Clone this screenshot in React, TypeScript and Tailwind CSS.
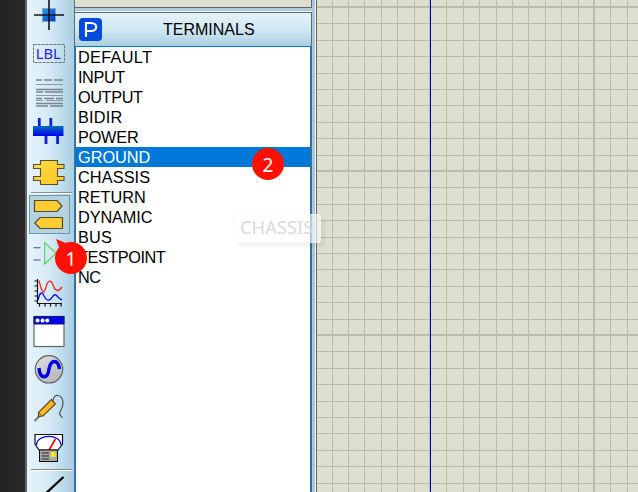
import type { ReactNode } from "react";

const terminals = [
  { name: "DEFAULT", tracking: "tracking-[0.3px]" },
  { name: "INPUT", tracking: "tracking-[-0.4px]" },
  { name: "OUTPUT", tracking: "tracking-[-0.4px]" },
  { name: "BIDIR", tracking: "tracking-[0.2px]" },
  { name: "POWER", tracking: "tracking-[-0.2px]" },
  { name: "GROUND", tracking: "" },
  { name: "CHASSIS", tracking: "tracking-[0.1px]" },
  { name: "RETURN", tracking: "" },
  { name: "DYNAMIC", tracking: "tracking-[-0.1px]" },
  { name: "BUS", tracking: "tracking-[0.2px]" },
  { name: "TESTPOINT", tracking: "tracking-[-0.45px]" },
  { name: "NC", tracking: "tracking-[-0.5px]" },
];

const minorSteps = [17, 34, 50, 67, 83, 99, 116, 132, 149];

// Each tool occupies one slot of the vertical strip.
function Tool({ top, height, children }: { top: number; height: number; children: ReactNode }) {
  return (
    <svg className="block shrink-0" width="47" height={height} viewBox={`27 ${top} 47 ${height}`} fill="none">
      {children}
    </svg>
  );
}

function Toolbar() {
  return (
    <div className="flex w-[47px] shrink-0 flex-col overflow-hidden bg-linear-to-r from-[#e7f4fb] via-[#d3e9f5] to-[#a9cfe2]">
      <Tool top={0} height={36}>
        <defs>
          <linearGradient id="node" x1="0" y1="0" x2="1" y2="1">
            <stop stopColor="#20a0e8" />
            <stop offset="1" stopColor="#0030f0" />
          </linearGradient>
        </defs>
        <rect x="42.5" y="8.5" width="13" height="13" fill="url(#node)" stroke="#8aa4b0" />
        <path d="M49 0V30M34 15H64" stroke="#151515" strokeWidth="1.6" />
      </Tool>
      <Tool top={36} height={36}>
        <rect x="33.5" y="44.5" width="31" height="18" stroke="#68747a" strokeDasharray="3 1" />
        <text x="35.8" y="59" fontSize="14.3" textLength="25" lengthAdjust="spacingAndGlyphs" fill="#2222e8" style={{ fontFamily: "'Noto Sans', sans-serif" }}>LBL</text>
      </Tool>
      <Tool top={72} height={40}>
        <path d="M36 80H42M44 80H52M54 80H63M36 89.5H63M36 92H43M45 92H63M36 98.5H42M44 98.5H54M56 98.5H63M36 103.5H63M36 106H48M50 106H63" stroke="#78858b" strokeWidth="1.3" />
        <path d="M36 84.5H63M36 95.5H63M36 100.5H43M46 100.5H63" stroke="#8c999f" />
      </Tool>
      <Tool top={112} height={40}>
        <defs>
          <linearGradient id="bus" x1="0" y1="0" x2="0" y2="1">
            <stop stopColor="#0870bc" />
            <stop offset="1" stopColor="#0000f0" />
          </linearGradient>
        </defs>
        <path d="M39.3 118V127M50.8 118V127M46 135V144M57.6 135V144" stroke="#0c20e0" strokeWidth="2.8" />
        <rect x="33" y="126" width="30.5" height="10" fill="url(#bus)" />
      </Tool>
      <Tool top={152} height={39}>
        <defs>
          <linearGradient id="chip" x1="0" y1="0" x2="1" y2="1">
            <stop stopColor="#ffdc50" />
            <stop offset="1" stopColor="#ffc41c" />
          </linearGradient>
        </defs>
        <path d="M40.5 160.5H57.5V164.5H64V168.5H57.5V176.5H64V180.5H57.5V184.5H40.5V180.5H33.5V176.5H40.5V168.5H33.5V164.5H40.5Z" fill="url(#chip)" stroke="#58502c" strokeWidth="1.1" />
      </Tool>
      <Tool top={191} height={46}>
        <path d="M31 192.5H72" stroke="#888f92" />
        <path d="M31 193.5H72" stroke="#ffffff" />
        <rect x="29.5" y="195.5" width="40" height="38" fill="#b5d2df" stroke="#649ab1" />
        <path d="M34.5 200.5H57L62 206L57 211.5H34.5Z" fill="#ffcc32" stroke="#4c4b32" strokeWidth="1.2" />
        <path d="M62.5 217.5H40L34.8 223L40 228.5H62.5Z" fill="#ffcc32" stroke="#4c4b32" strokeWidth="1.2" />
      </Tool>
      <Tool top={237} height={37}>
        <path d="M33.5 247.7H40.5M33.5 260H40.5" stroke="#46565c" strokeWidth="1.1" />
        <path d="M44.7 242.5V264L56 253.3Z" stroke="#50d060" strokeWidth="1.1" />
      </Tool>
      <Tool top={274} height={37}>
        <path d="M37.5 279V303.5H62M34.5 281H37M34.5 286H37M34.5 291H37M34.5 296H37M34.5 301H37M39.5 304V306.5M45 304V306.5M50.5 304V306.5M56 304V306.5M61 304V306.5" stroke="#111" strokeWidth="1.2" />
        <path d="M39 280.5L41 288C43 293 44 294 46 287C48 280 51 279 53 285C56 293 59 291 62 287" stroke="#ff2020" strokeWidth="1.3" />
        <path d="M38 300C40 292 42 291 44 296C48 303 50 300 53 296C55 293 57 296 59 298L62 300" stroke="#0000ff" strokeWidth="1.3" />
      </Tool>
      <Tool top={311} height={39}>
        <rect x="34" y="316.5" width="30" height="30" fill="white" stroke="#5c6568" strokeWidth="1.2" />
        <path d="M34 316.5H64V324H34Z" fill="#0000f2" stroke="#171768" />
        <path d="M37.5 320.4H37.6M42.5 320.4H42.6M47.2 320.4H47.3" stroke="white" strokeWidth="4" strokeLinecap="round" />
      </Tool>
      <Tool top={350} height={38}>
        <defs>
          <linearGradient id="generator" x1="0" y1="0" x2="1" y2="1">
            <stop stopColor="#e2e2e2" />
            <stop offset="1" stopColor="#b0b0b0" />
          </linearGradient>
        </defs>
        <circle cx="49" cy="369.3" r="13.7" fill="url(#generator)" stroke="#606367" strokeWidth="1.2" />
        <path d="M39 368C40 380 48 379 49 369C51 359 58 359 59.5 369" stroke="#0000f0" strokeWidth="3.4" />
      </Tool>
      <Tool top={388} height={40}>
        <path d="M34.5 421L40 415.5" stroke="#6e777a" strokeWidth="2" />
        <path d="M38.5 412.5L51.5 399.5L55.3 404L43 416L38.5 416.5Z" fill="#ffbc20" stroke="#5e4a20" strokeWidth="1.2" />
        <path d="M38.5 413L42.5 416" stroke="#57522d" />
        <path d="M53 401C54 393 62 394 63 402C64 410 57 412 60.5 415.5L62.5 418" stroke="#465158" strokeWidth="1.2" />
      </Tool>
      <Tool top={428} height={41}>
        <path d="M35 434.5H62.5V444L58 450H39L35 444Z" fill="white" stroke="#111" strokeWidth="1.2" />
        <path d="M36.5 445C37 433.5 60.5 433.5 61 445" stroke="#0000ff" strokeWidth="1.3" />
        <path d="M49 450L55.5 439" stroke="#f00" strokeWidth="1.6" />
        <rect x="39.5" y="450" width="18" height="11.5" fill="#aaa" stroke="#111" />
        <path d="M41.5 453H49M41.5 456H49M41.5 459H49" stroke="#222" />
        <rect x="51" y="452" width="4.5" height="5" fill="#ffef10" />
      </Tool>
      <Tool top={469} height={23}>
        <path d="M31 469.5H72" stroke="#7f898e" />
        <path d="M31 470.5H72" stroke="#fff" />
        <path d="M43 496L63.5 477" stroke="#050505" strokeWidth="2.3" />
      </Tool>
    </div>
  );
}

function TerminalPanel() {
  return (
    <section className="flex w-[238px] shrink-0 flex-col border-l border-[#666b70]">
      <div className="h-2 shrink-0 border-r border-b border-[#666] bg-[#dfdfd0]" />
      <div className="h-[3px] shrink-0 bg-[#aecbdc]" />
      <div className="h-px shrink-0 bg-[#edf5f8]" />
      <header className="flex h-[34px] shrink-0 items-center border-t border-r border-[#666] bg-linear-to-b from-[#e4f2f9] via-[#d1e8f3] to-[#aacfe1]">
        <div className="ml-[4px] flex size-[23px] items-center justify-center rounded-[4px] bg-[#034bdc]">
          <svg width="23" height="23" viewBox="0 0 23 23" fill="none">
            <path d="M7 19V5H12C19 5 19 13 12 13H7" stroke="white" strokeWidth="2.1" />
          </svg>
        </div>
        <h1 className="ml-[61px] text-[16px] leading-[20px] font-normal">TERMINALS</h1>
      </header>
      <div className="flex flex-1 flex-col border-r border-[#666]">
        <ul className="flex-1 border-t border-r border-l border-[#0078d7] bg-white">
          {terminals.map(({ name, tracking }) => (
            <li
              key={name}
              className={`h-5 pl-[2px] text-[16.3px] leading-[20px] ${tracking} ${name === "GROUND" ? "bg-[#0078d7] text-white" : ""}`}
            >
              {name}
            </li>
          ))}
        </ul>
      </div>
    </section>
  );
}

function Schematic() {
  return (
    <svg className="block shrink-0 bg-[#dfdfd0]" width="321" height="492" viewBox="317 0 321 492" shapeRendering="crispEdges">
      <g fill="#bbbbae">
        {[265, 429, 593].map((base) => (
          <g key={base}>
            <rect x={base} width="2" height="492" />
            {minorSteps.map((step) => <rect key={step} x={base + step} width="1" height="492" />)}
          </g>
        ))}
        {[-158, 6, 170, 334].map((base) => (
          <g key={base}>
            <rect x="317" y={base} width="321" height="2" />
            {minorSteps.map((step) => <rect key={step} x="317" y={base + step} width="321" height="1" />)}
          </g>
        ))}
      </g>
      <rect x="430" width="1" height="492" fill="#0000bf" />
    </svg>
  );
}

export default function App() {
  return (
    <main className="relative flex h-[492px] w-[638px] overflow-hidden bg-[#aecbdc] font-['Liberation_Sans',Arial,sans-serif] text-black">
      <div className="w-[25px] shrink-0 bg-linear-to-r from-[#222224] to-[#2a2a2c]" />
      <div className="w-[2px] shrink-0 bg-[#626466]" />
      <Toolbar />
      <TerminalPanel />
      <div className="w-[3px] shrink-0 bg-[#a9cadc]" />
      <div className="w-px shrink-0 bg-[#edf5f8]" />
      <div className="w-px shrink-0 bg-[#666]" />
      <Schematic />

      <div className="absolute top-[214px] left-[234px] flex h-[29px] w-[87px] items-center rounded-[3px] border border-[#f2f2f2]/60 bg-white/60 pl-[5px] font-['Noto_Sans',sans-serif] text-[18px] text-[#dadada] shadow-[4px_4px_3px_rgba(0,0,0,0.05)]">
        <span className="-mt-[2px] inline-block origin-left scale-x-[1.02]">CHASSIS</span>
      </div>
      <div className="absolute top-[148px] left-[252px] flex size-8 items-center justify-center rounded-full bg-[#ff1005] font-['Noto_Sans',sans-serif] text-[19px] text-white">
        <span className="mt-[2px]">2</span>
      </div>
      <svg className="absolute top-[238px] left-[55px]" width="18" height="18" viewBox="0 0 18 18">
        <path d="M1 1L18 8L7 18Z" fill="#ff1005" />
      </svg>
      <div className="absolute top-[242px] left-[55px] flex size-8 items-center justify-center rounded-full bg-[#ff1005] font-['Noto_Sans',sans-serif] text-[19px] text-white">
        <span className="mt-[2px]">1</span>
      </div>
    </main>
  );
}
